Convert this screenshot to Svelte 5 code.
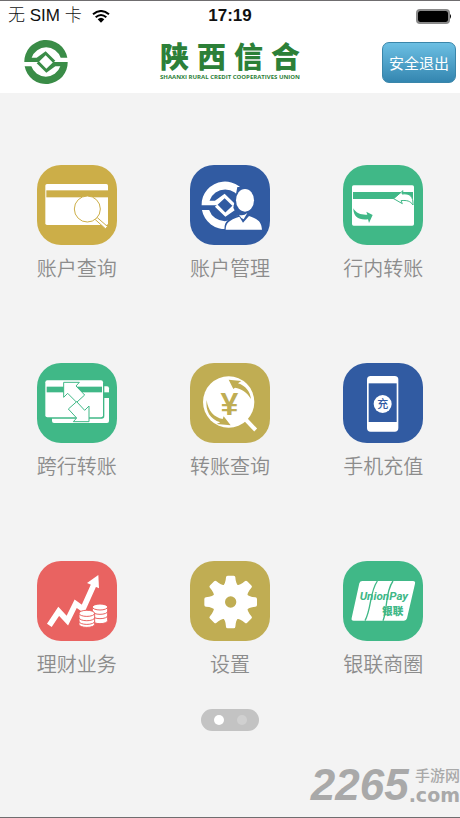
<script lang="ts">
  interface Service {
    icon: string;
    label: string;
    tone: "gold" | "khaki" | "blue" | "green" | "red";
  }

  const services: Service[] = [
    { icon: "query", label: "账户查询", tone: "gold" },
    { icon: "manage", label: "账户管理", tone: "blue" },
    { icon: "internal", label: "行内转账", tone: "green" },
    { icon: "interbank", label: "跨行转账", tone: "green" },
    { icon: "history", label: "转账查询", tone: "khaki" },
    { icon: "topup", label: "手机充值", tone: "blue" },
    { icon: "wealth", label: "理财业务", tone: "red" },
    { icon: "settings", label: "设置", tone: "khaki" },
    { icon: "unionpay", label: "银联商圈", tone: "green" },
  ];

  const brand = ["陕", "西", "信", "合"];
  const teeth = [0, 45, 90, 135, 180, 225, 270, 315];

  let page = $state(0);
</script>

<!-- Bank mark, centred on 0,0 with a radius of about 65 -->
{#snippet half()}
  <path d="M-65 0A65 64 0 0 1 64 -13H44A46 46 0 0 0 -43 -13H-28L-1 -32L28 -4L21 2L-1 -20L-22 0Z" />
{/snippet}

{#snippet mark()}
  {@render half()}
  <g transform="rotate(180)">{@render half()}</g>
{/snippet}

<div class="screen">
  <div class="status">
    <div class="carrier">
      <span>无 SIM 卡</span>
      <svg class="wifi" viewBox="0 0 54 39" aria-hidden="true">
        <path d="M3 13Q27 -7 51 13" />
        <path d="M11 22Q27 8 43 22" />
        <path class="solid" d="M17 28Q27 19 37 28L27 38Z" />
      </svg>
    </div>
    <time>17:19</time>
    <svg class="battery" viewBox="0 0 36 15" aria-hidden="true">
      <rect class="shell" x="1" y="1" width="32" height="13" rx="3" />
      <rect x="2" y="2" width="30" height="11" rx="2" />
      <path d="M34 5Q36 7 34 10Z" />
    </svg>
  </div>

  <header>
    <svg class="logo" viewBox="-66 -66 132 132" aria-hidden="true">{@render mark()}</svg>
    <div class="brand">
      <h1>
        {#each brand as char}<span>{char}</span>{/each}
      </h1>
      <p>SHAANXI RURAL CREDIT COOPERATIVES UNION</p>
    </div>
    <button class="logout" type="button">安全退出</button>
  </header>

  <main>
    <nav class="grid">
      {#each services as service (service.icon)}
        <button class="service" type="button">
          <svg class="tile {service.tone}" viewBox="30 30 240 240" aria-hidden="true">
            {#if service.icon === "query"}
              <rect x="55" y="87" width="188" height="123" rx="5" />
              <rect class="ink" x="58" y="106" width="185" height="21" />
              <path class="outlined" d="M203 192L211 188L242 215L235 221Z" />
              <circle class="outlined" cx="181" cy="162" r="39" />
            {:else if service.icon === "manage"}
              <g transform="translate(135 151) scale(1.08)">{@render mark()}</g>
              <path class="ink" d="M132 240L134 212C137 194 154 188 172 182L160 158L172 96H240V240Z" />
              <path d="M137 224C138 203 146 196 178 185L189 203L207 183C238 193 244 202 246 224Z" />
              <path d="M177 179Q190 184 202 174L191 193Q182 189 177 179Z" />
              <ellipse cx="195" cy="136" rx="27" ry="34" />
            {:else if service.icon === "internal"}
              <rect x="57" y="91" width="186" height="121" rx="5" />
              <rect class="ink" x="60" y="111" width="180" height="21" />
              <path class="outlined" d="M182 131L210 107L207 117C231 114 241 124 240 150C232 138 222 135 204 137L208 146Z" />
              <path class="ink" d="M61 160C70 176 85 180 103 179L100 170L119 180L108 204L105 193C78 196 61 187 61 160Z" />
            {:else if service.icon === "interbank"}
              <rect x="75" y="100" width="171" height="110" rx="6" />
              <rect class="ink" x="222" y="118" width="24" height="17" />
              <rect class="ink" x="50" y="78" width="182" height="119" rx="8" />
              <rect x="55" y="82" width="173" height="111" rx="6" />
              <rect class="ink" x="59" y="101" width="166" height="17" />
              <path class="outlined" d="M110 88H157L147 99L173 126L149 148L122 121L110 133Z" />
              <path class="outlined" d="M186 206H139L149 195L124 168L149 146L173 172L186 159Z" />
            {:else if service.icon === "history"}
              <circle cx="146" cy="147" r="77" />
              <path class="handle" d="M190 192L227 231" />
              <path class="ink" d="M146 80L184 84L174 91C197 99 210 115 213 138C201 117 184 108 165 104L160 108Z" />
              <path class="ink" d="M80 141C84 174 102 193 128 198L131 190L152 217L110 213L121 208C90 199 76 174 80 141Z" />
              <text class="yen" x="148" y="185">¥</text>
            {:else if service.icon === "topup"}
              <rect x="102" y="69" width="94" height="167" rx="11" />
              <rect class="ink" x="107" y="91" width="84" height="116" />
              <circle cx="149" cy="153" r="27" />
              <text class="charge" x="149" y="165">充</text>
            {:else if service.icon === "wealth"}
              <path class="trend" d="M67 223L95 181L121 209L146 158L168 174L202 98" />
              <path d="M214 72L180 96L216 112Z" />
              <path class="coin" d="M196 168V209A23 9 0 0 0 242 209V168A23 9 0 0 0 196 168ZM196 181A23 9 0 0 0 242 181M196 194A23 9 0 0 0 242 194M196 168A23 9 0 0 0 242 168" />
              <path class="coin" d="M156 187V220A23 9 0 0 0 203 220V187A23 9 0 0 0 156 187ZM156 200A23 9 0 0 0 203 200M156 211A23 9 0 0 0 203 211M156 187A23 9 0 0 0 203 187" />
            {:else if service.icon === "settings"}
              <circle cx="152" cy="153" r="54" />
              {#each teeth as angle}
                <path transform="rotate({angle} 152 153)" d="M126 108Q137 100 138 79Q138 74 143 74H161Q166 74 166 79Q167 100 178 108Z" />
              {/each}
              <circle class="ink" cx="152" cy="153" r="17" />
            {:else}
              <path d="M88 90H240Q248 90 246 98L222 202Q220 209 213 209H62Q54 209 56 201L79 97Q81 90 88 90Z" />
              <path class="fold" d="M133 90C109 126 116 172 96 209M180 90C155 126 165 172 150 209" />
              <text class="union" x="80" y="147">UnionPay</text>
              <text class="union-cn" x="147" y="191">银联</text>
            {/if}
          </svg>
          <span>{service.label}</span>
        </button>
      {/each}
    </nav>

    <div class="pager">
      {#each [0, 1] as index}
        <button
          type="button"
          class:active={page === index}
          aria-label="第{index + 1}页"
          onclick={() => (page = index)}
        ></button>
      {/each}
    </div>
  </main>

  <div class="watermark">
    <strong>2265</strong>
    <div>
      <span>手游网</span>
      <b>.com</b>
    </div>
  </div>
</div>

<style>
  :global(body) {
    margin: 0;
    background: #f3f3f3;
  }

  .screen {
    position: relative;
    box-sizing: border-box;
    min-height: 100vh;
    border-top: 1px solid #6f6d6f;
    border-bottom: 1px solid #6f6d6f;
    background: #f3f3f3;
    font-family: "Liberation Sans", "Noto Sans CJK SC", sans-serif;
  }

  button {
    padding: 0;
    border: 0;
    background: none;
    font-family: inherit;
    cursor: pointer;
  }

  .status,
  header {
    display: grid;
    grid-template-columns: 1fr auto 1fr;
    align-items: center;
    background: #fff;
  }

  .status {
    height: 30px;
    padding: 0 8px;
    color: #111;
    font-size: 17px;
    line-height: 30px;
  }

  .carrier {
    display: flex;
    align-items: center;
    gap: 10px;
    font-weight: 300;
  }

  .wifi {
    width: 18px;
    height: 13px;
    fill: none;
    stroke: #000;
    stroke-width: 6;
  }

  .wifi .solid {
    fill: #000;
    stroke: none;
  }

  time {
    font-weight: 700;
  }

  .battery {
    justify-self: end;
    width: 36px;
    height: 15px;
  }

  .shell {
    fill: #fff;
    stroke: #8a8a8a;
    stroke-width: 2;
  }

  header {
    height: 62px;
    padding: 0 4px;
  }

  .logo {
    width: 44px;
    height: 44px;
    margin-left: 20px;
    fill: #3a8c47;
  }

  .brand {
    color: #2c8038;
  }

  h1 {
    display: flex;
    justify-content: space-between;
    margin: 0;
    font-size: 29px;
    font-weight: 900;
    line-height: 30px;
  }

  .brand p {
    margin: 0;
    font-family: "Open Sans", sans-serif;
    font-size: 6px;
    font-weight: 700;
    line-height: 8px;
  }

  .logout {
    justify-self: end;
    box-sizing: border-box;
    height: 41px;
    padding: 0 6px;
    border: 1px solid #3a86aa;
    border-radius: 7px;
    background: linear-gradient(#6cbfe3, #3486b0);
    color: #fff;
    font-size: 15px;
  }

  main {
    padding: 72px 0 32px;
  }

  .grid {
    display: grid;
    grid-template-columns: repeat(3, 1fr);
    row-gap: 82px;
  }

  .service {
    display: flex;
    flex-direction: column;
    align-items: center;
    gap: 12px;
    color: #8c8c8c;
    font-size: 20px;
    font-weight: 350;
    line-height: 24px;
  }

  .tile {
    width: 80px;
    height: 80px;
    border-radius: 24px;
    background: var(--tone);
    fill: #fff;
  }

  .gold {
    --tone: #ccae48;
  }

  .khaki {
    --tone: #c0ad53;
  }

  .blue {
    --tone: #315ba2;
  }

  .green {
    --tone: #40b887;
  }

  .red {
    --tone: #e96361;
  }

  .ink {
    fill: var(--tone);
  }

  .outlined {
    stroke: var(--tone);
    stroke-width: 3;
  }

  .handle {
    stroke: #fff;
    stroke-width: 12;
  }

  .trend {
    fill: none;
    stroke: #fff;
    stroke-width: 17;
  }

  .coin {
    stroke: var(--tone);
    stroke-width: 3;
  }

  .fold {
    fill: none;
    stroke: var(--tone);
    stroke-width: 4;
  }

  text {
    fill: var(--tone);
    font-weight: 700;
  }

  .yen {
    font-size: 96px;
    text-anchor: middle;
  }

  .charge {
    font-size: 33px;
    font-weight: 500;
    text-anchor: middle;
  }

  .union {
    font-family: Roboto, sans-serif;
    font-size: 35px;
    font-style: italic;
  }

  .union-cn {
    font-size: 32px;
    font-weight: 900;
  }

  .pager {
    display: flex;
    align-items: center;
    justify-content: center;
    gap: 13px;
    width: 58px;
    height: 22px;
    margin: 32px auto 0;
    border-radius: 11px;
    background: #c3c3c3;
  }

  .pager button {
    width: 10px;
    height: 10px;
    border-radius: 50%;
    background: #d0d0d0;
  }

  .pager .active {
    background: #fff;
  }

  .watermark {
    position: absolute;
    right: 0;
    bottom: 12px;
    display: flex;
    align-items: flex-end;
    color: #a9a9a9;
    pointer-events: none;
  }

  .watermark strong {
    font-size: 44px;
    font-style: italic;
    line-height: 40px;
  }

  .watermark div {
    display: flex;
    flex-direction: column;
    align-items: flex-end;
  }

  .watermark span {
    font-size: 15px;
    font-weight: 500;
    line-height: 18px;
  }

  .watermark b {
    font-family: "DejaVu Sans", sans-serif;
    font-size: 19px;
    line-height: 20px;
  }
</style>
